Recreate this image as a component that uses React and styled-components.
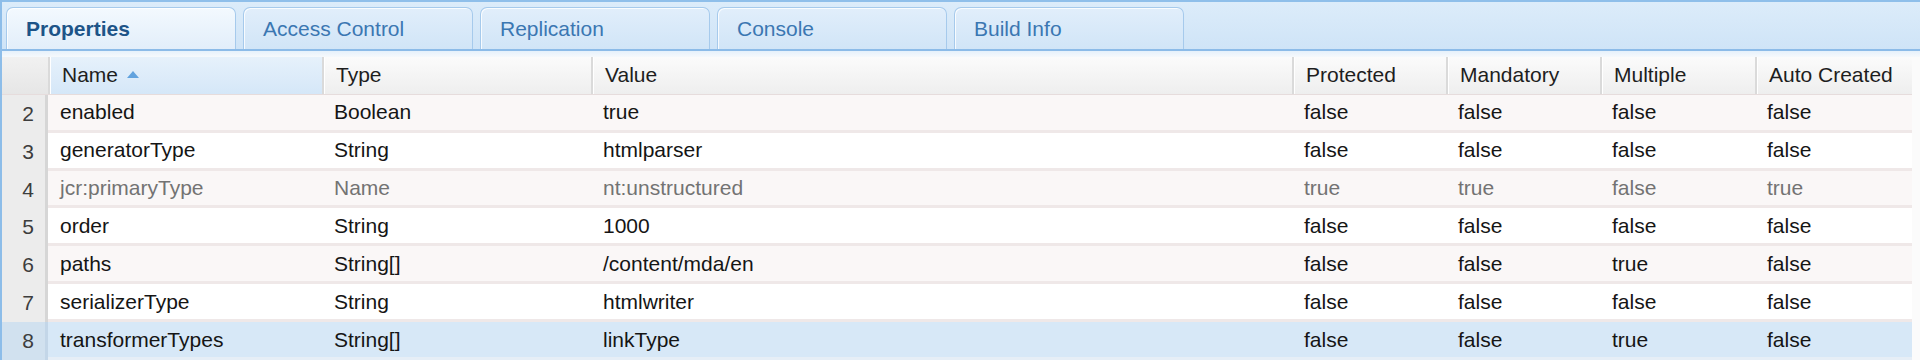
import React from "react";
import styled, { createGlobalStyle } from "styled-components";

const Global = createGlobalStyle`
  html, body { margin: 0; padding: 0; background: #ffffff; }
  body { width: 1920px; height: 360px; overflow: hidden; font-family: "Liberation Sans", Arial, sans-serif; }
`;

const Page = styled.div`
  width: 1920px;
  height: 360px;
  box-sizing: border-box;
  border-left: 2px solid #8dbde9;
  display: flex;
  flex-direction: column;
  overflow: hidden;
  background: #fbfbfb;
`;

const TabStrip = styled.div`
  display: flex;
  align-items: flex-end;
  gap: 7px;
  height: 51px;
  box-sizing: border-box;
  padding: 5px 0 0 4px;
  border-top: 2px solid #8fbfea;
  border-bottom: 2px solid #8cbbe8;
  background: linear-gradient(#dcecfa, #cfe4f7);
`;

const Tab = styled.div`
  width: 230px;
  height: 42px;
  box-sizing: border-box;
  display: flex;
  align-items: center;
  padding-left: 19px;
  border: 1px solid #a6caec;
  border-bottom: none;
  border-radius: 7px 7px 0 0;
  box-shadow: inset 1px 1px 0 rgba(255, 255, 255, 0.8);
  font-size: 21px;
  background: ${(p) => (p.$active ? "linear-gradient(#f3f9fe, #e2eefa)" : "linear-gradient(#e1eefb, #d1e5f7)")};
  color: ${(p) => (p.$active ? "#1d5488" : "#3b77b2")};
  font-weight: ${(p) => (p.$active ? 700 : 400)};
`;

const Band = styled.div`
  height: 6px;
  background: linear-gradient(#e6f1fb, #f6f9fc);
`;

const Grid = styled.div`
  display: grid;
  grid-template-columns: 46px 274px 269px 701px 154px 154px 155px 157px;
  width: 1910px;
`;

const HeaderRow = styled(Grid)`
  height: 38px;
  border-bottom: 1px solid #e6dcdc;
  box-sizing: border-box;
`;

const HeadCell = styled.div`
  display: flex;
  align-items: center;
  padding-left: 12px;
  font-size: 21px;
  color: #1e1e1e;
  border-left: 2px solid #dadada;
  box-shadow: inset 1px 0 0 #ffffff;
  background: ${(p) => (p.$sorted ? "linear-gradient(#e6f1fb, #d5e7f8)" : "linear-gradient(#fbfbfb, #eeeeee)")};
`;

const CornerCell = styled.div`
  background: linear-gradient(#f1f1f1, #e6e6e6);
`;

const SortArrow = styled.span`
  display: inline-block;
  margin-left: 9px;
  width: 0;
  height: 0;
  border-left: 6px solid transparent;
  border-right: 6px solid transparent;
  border-bottom: 7px solid #62a3de;
  margin-top: -2px;
`;

const Row = styled(Grid)`
  height: 38px;
  box-sizing: border-box;
  border-bottom: 3px solid ${(p) => (p.$selected ? "#e6eef6" : "#efe8e8")};
  background: ${(p) => (p.$selected ? "#d7e8f7" : p.$odd ? "#faf7f7" : "#ffffff")};
  color: ${(p) => (p.$muted ? "#737373" : "#151515")};
`;

const NumCell = styled.div`
  display: flex;
  align-items: center;
  justify-content: flex-end;
  padding-right: 11px;
  font-size: 21px;
  color: #3d3d3d;
  background: ${(p) => (p.$selected ? "#d1e1ef" : "#ececec")};
  border-right: 3px solid ${(p) => (p.$selected ? "#c3d6e8" : "#d6d6d6")};
  margin-bottom: -3px;
`;

const Cell = styled.div`
  display: flex;
  align-items: center;
  padding-left: 12px;
  font-size: 21px;
  white-space: nowrap;
  overflow: hidden;
`;

const headers = ["Name", "Type", "Value", "Protected", "Mandatory", "Multiple", "Auto Created"];

const rows = [
  [2, "enabled", "Boolean", "true", "false", "false", "false", "false"],
  [3, "generatorType", "String", "htmlparser", "false", "false", "false", "false"],
  [4, "jcr:primaryType", "Name", "nt:unstructured", "true", "true", "false", "true"],
  [5, "order", "String", "1000", "false", "false", "false", "false"],
  [6, "paths", "String[]", "/content/mda/en", "false", "false", "true", "false"],
  [7, "serializerType", "String", "htmlwriter", "false", "false", "false", "false"],
  [8, "transformerTypes", "String[]", "linkType", "false", "false", "true", "false"],
];

const tabs = ["Properties", "Access Control", "Replication", "Console", "Build Info"];

export default function App() {
  return (
    <>
      <Global />
      <Page>
        <TabStrip>
          {tabs.map((t, i) => (
            <Tab key={t} $active={i === 0}>
              {t}
            </Tab>
          ))}
        </TabStrip>
        <Band />
        <HeaderRow>
          <CornerCell />
          {headers.map((h, i) => (
            <HeadCell key={h} $sorted={i === 0}>
              {h}
              {i === 0 && <SortArrow />}
            </HeadCell>
          ))}
        </HeaderRow>
        {rows.map((r, idx) => {
          const [n, ...cells] = r;
          const selected = n === 8;
          return (
            <Row key={n} $odd={idx % 2 === 0} $selected={selected} $muted={n === 4}>
              <NumCell $selected={selected}>{n}</NumCell>
              {cells.map((c, j) => (
                <Cell key={j}>{c}</Cell>
              ))}
            </Row>
          );
        })}
      </Page>
    </>
  );
}
